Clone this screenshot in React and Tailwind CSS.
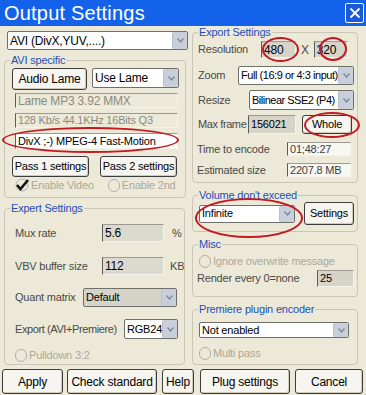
import React from 'react';

const Arrow = () => (
  <div className="flex w-[15px] shrink-0 items-center justify-center rounded-[2px] bg-[#c9cfda] border-l border-[#b7bfcc]">
    <svg width="9" height="7" viewBox="0 0 9 7">
      <path d="M1.5 1.5 L4.5 5 L7.5 1.5" fill="none" stroke="#7d889c" strokeWidth="1.4" />
    </svg>
  </div>
);

const Sel = ({ className = '', bg = 'bg-white', children }) => (
  <div className={`flex border border-[#6f6f6a] rounded-[2px] ${bg} ${className}`}>
    <div className="flex-1 pl-[2px] leading-none flex items-center text-black whitespace-nowrap overflow-hidden">
      {children}
    </div>
    <Arrow />
  </div>
);

const Field = ({ className = '', bg = 'bg-transparent', text = 'text-black', children }) => (
  <div className={`flex items-center pl-[2px] border border-t-[#9c9a90] border-l-[#5c5c58] border-r-[#f4f3ee] border-b-[#f4f3ee] leading-none whitespace-nowrap overflow-hidden ${bg} ${text} ${className}`}>
    {children}
  </div>
);

const Btn = ({ className = '', children }) => (
  <div className={`flex items-center justify-center rounded-[3px] border border-[#3c3c3c] bg-[#f6f5f0] shadow-[inset_-1px_-1px_0_#cfcbbd] text-black leading-none whitespace-nowrap ${className}`}>
    {children}
  </div>
);

const Radio = ({ label, className = '' }) => (
  <div className={`flex items-center whitespace-nowrap text-[#aca899] ${className}`}>
    <div className="w-[12px] h-[13px] shrink-0 rounded-full border border-[#b2b0a4] bg-[#ece9d8] mr-[2px]" />
    <span>{label}</span>
  </div>
);

const Group = ({ label, className = '', children }) => (
  <fieldset className={`border border-[#c9c6b6] rounded-[4px] ${className}`}>
    <legend className="ml-[5px] px-[1px] leading-[13px] text-[#1d4fb8]">{label}</legend>
    {children}
  </fieldset>
);

const Ring = ({ className }) => (
  <div className={`absolute rounded-[50%] border-2 border-[#c31a22] pointer-events-none ${className}`} />
);

export default function App() {
  return (
    <div className="relative w-[366px] h-[395px] overflow-hidden bg-[#ece9d8] text-[11px] tracking-[-0.2px] text-[#4a4a46] font-['Liberation_Sans',Arial,sans-serif]">
      {/* title bar */}
      <div className="flex items-center justify-between h-[26px] bg-[#1562ea] pl-[4px] pr-[2px]">
        <span className="text-white text-[20px] leading-none tracking-[0.2px]">Output Settings</span>
        <div className="flex items-center justify-center w-[19px] h-[20px] border border-white rounded-[2px] bg-[#1a5ad8]">
          <svg width="12" height="12" viewBox="0 0 12 12">
            <path d="M1.5 1.5 L10.5 10.5 M10.5 1.5 L1.5 10.5" stroke="white" strokeWidth="1.8" />
          </svg>
        </div>
      </div>

      <div className="flex h-[343px]">
        {/* left column */}
        <div className="w-[190px] pl-[4px] flex flex-col">
          <Sel className="mt-[5px] ml-[3px] w-[181px] h-[19px] text-[12px]">AVI (DivX,YUV,....)</Sel>

          <Group label="AVI specific" className="mt-[4px] w-[182px] h-[144px]">
            <div className="flex items-start mt-[1px]">
              <Btn className="ml-[7px] w-[75px] h-[22px] text-[12px]">Audio Lame</Btn>
              <Sel className="ml-[5px] w-[87px] h-[20px] text-[12px]">Use Lame</Sel>
            </div>
            <Field className="mt-[3px] ml-[10px] w-[163px] h-[15px] text-[12px]" text="text-[#8c8a80]">Lame MP3 3.92 MMX</Field>
            <Field className="mt-[5px] ml-[10px] w-[163px] h-[15px]" text="text-[#8c8a80]">128 Kb/s 44.1KHz 16Bits Q3</Field>
            <Field className="mt-[5px] ml-[10px] w-[163px] h-[16px]" bg="bg-white">DivX ;-) MPEG-4 Fast-Motion</Field>
            <div className="flex mt-[7px]">
              <Btn className="ml-[7px] w-[77px] h-[21px]">Pass 1 settings</Btn>
              <Btn className="ml-[11px] w-[77px] h-[21px]">Pass 2 settings</Btn>
            </div>
            <div className="flex items-center mt-[1px] h-[14px] whitespace-nowrap">
              <div className="flex items-center ml-[10px] text-[#aca899]">
                <svg width="15" height="14" viewBox="0 0 15 14" className="mr-[1px] shrink-0">
                  <circle cx="7" cy="7" r="6" fill="none" stroke="#b2b0a4" />
                  <path d="M2 7 L5.5 11 L13 2" fill="none" stroke="#111" strokeWidth="2.6" />
                </svg>
                <span>Enable Video</span>
              </div>
              <Radio label="Enable 2nd" className="ml-[14px]" />
            </div>
          </Group>

          <Group label="Expert Settings" className="mt-[4px] w-[181px] h-[163px]">
            <div className="flex items-center mt-[9px] h-[18px]">
              <span className="ml-[10px] w-[87px]">Mux rate</span>
              <Field className="w-[62px] h-[18px] text-[12px]" bg="bg-[#dcdacf]">5.6</Field>
              <span className="ml-[8px]">%</span>
            </div>
            <div className="flex items-center mt-[15px] h-[18px]">
              <span className="ml-[10px] w-[87px]">VBV buffer size</span>
              <Field className="w-[62px] h-[18px] text-[12px]" bg="bg-[#dcdacf]">112</Field>
              <span className="ml-[6px]">KB</span>
            </div>
            <div className="flex items-center mt-[13px] h-[19px]">
              <span className="ml-[10px] w-[68px]">Quant matrix</span>
              <Sel className="w-[94px] h-[19px]" bg="bg-[#d6d3c8]">Default</Sel>
            </div>
            <div className="flex items-center mt-[12px] h-[20px]">
              <span className="ml-[10px] w-[105px] whitespace-nowrap tracking-[-0.4px]">Export (AVI+Premiere)</span>
              <Sel className="ml-[4px] w-[54px] h-[20px]">RGB24</Sel>
            </div>
            <Radio label="Pulldown 3:2" className="mt-[9px] ml-[10px] h-[14px]" />
          </Group>
        </div>

        {/* right column */}
        <div className="w-[166px] ml-[2px] flex flex-col">
          <Group label="Export Settings" className="w-[166px] h-[157px]">
            <div className="flex items-center mt-[2px] h-[17px]">
              <span className="ml-[5px] w-[63px]">Resolution</span>
              <Field className="w-[35px] h-[17px] text-[12px]" bg="bg-[#d6d3c8]">480</Field>
              <span className="mx-[5px] text-[12px]">X</span>
              <Field className="w-[34px] h-[17px] text-[12px]" bg="bg-[#d6d3c8]">320</Field>
            </div>
            <div className="flex items-center mt-[8px] h-[19px]">
              <span className="ml-[5px] w-[40px]">Zoom</span>
              <Sel className="w-[116px] h-[19px] tracking-[-0.45px]">Full (16:9 or 4:3 input)</Sel>
            </div>
            <div className="flex items-center mt-[5px] h-[20px]">
              <span className="ml-[5px] w-[51px]">Resize</span>
              <Sel className="w-[105px] h-[20px] tracking-[-0.5px]">Bilinear SSE2 (P4)</Sel>
            </div>
            <div className="flex items-center mt-[5px] h-[19px]">
              <span className="ml-[5px] w-[50px] whitespace-nowrap tracking-[-0.4px]">Max frame</span>
              <Field className="w-[48px] h-[19px]" bg="bg-[#d6d3c8]">156021</Field>
              <Btn className="ml-[6px] w-[50px] h-[19px]">Whole</Btn>
            </div>
            <div className="flex items-center mt-[8px] h-[14px]">
              <span className="ml-[4px] w-[90px]">Time to encode</span>
              <Field className="w-[64px] h-[14px]" bg="bg-[#f8f7f2]" text="text-[#3c3c3c]">01;48:27</Field>
            </div>
            <div className="flex items-center mt-[7px] h-[14px]">
              <span className="ml-[4px] w-[90px]">Estimated size</span>
              <Field className="w-[64px] h-[14px]" bg="bg-[#f8f7f2]" text="text-[#3c3c3c]">2207.8 MB</Field>
            </div>
          </Group>

          <Group label="Volume don't exceed" className="mt-[6px] w-[166px] h-[43px]">
            <div className="flex items-center">
              <Sel className="ml-[6px] w-[96px] h-[18px]">Infinite</Sel>
              <Btn className="ml-[9px] w-[50px] h-[23px]">Settings</Btn>
            </div>
          </Group>

          <Group label="Misc" className="mt-[6px] w-[166px] h-[59px]">
            <Radio label="Ignore overwrite message" className="mt-[3px] ml-[6px] h-[14px]" />
            <div className="flex items-center mt-[2px] h-[17px]">
              <span className="ml-[4px] w-[120px]">Render every 0=none</span>
              <Field className="w-[37px] h-[17px]" bg="bg-[#d6d3c8]">25</Field>
            </div>
          </Group>

          <Group label="Premiere plugin encoder" className="mt-[6px] w-[166px] h-[62px]">
            <Sel className="mt-[6px] ml-[6px] w-[150px] h-[16px]">Not enabled</Sel>
            <Radio label="Multi pass" className="mt-[8px] ml-[6px] h-[14px]" />
          </Group>
        </div>
      </div>

      {/* bottom buttons */}
      <div className="flex items-start h-[26px] text-[12px]">
        <Btn className="ml-[2px] w-[61px] h-[25px]">Apply</Btn>
        <Btn className="ml-[4px] w-[90px] h-[25px]">Check standard</Btn>
        <Btn className="ml-[5px] w-[32px] h-[25px]">Help</Btn>
        <Btn className="ml-[6px] w-[90px] h-[25px]">Plug settings</Btn>
        <Btn className="ml-[5px] w-[68px] h-[25px]">Cancel</Btn>
      </div>

      {/* red annotation ellipses */}
      <Ring className="left-[262px] top-[37px] w-[37px] h-[25px]" />
      <Ring className="left-[319px] top-[37px] w-[28px] h-[24px]" />
      <Ring className="left-[2px] top-[127px] w-[177px] h-[26px]" />
      <Ring className="left-[304px] top-[112px] w-[56px] h-[26px]" />
      <Ring className="left-[195px] top-[198px] w-[108px] h-[40px]" />
    </div>
  );
}
